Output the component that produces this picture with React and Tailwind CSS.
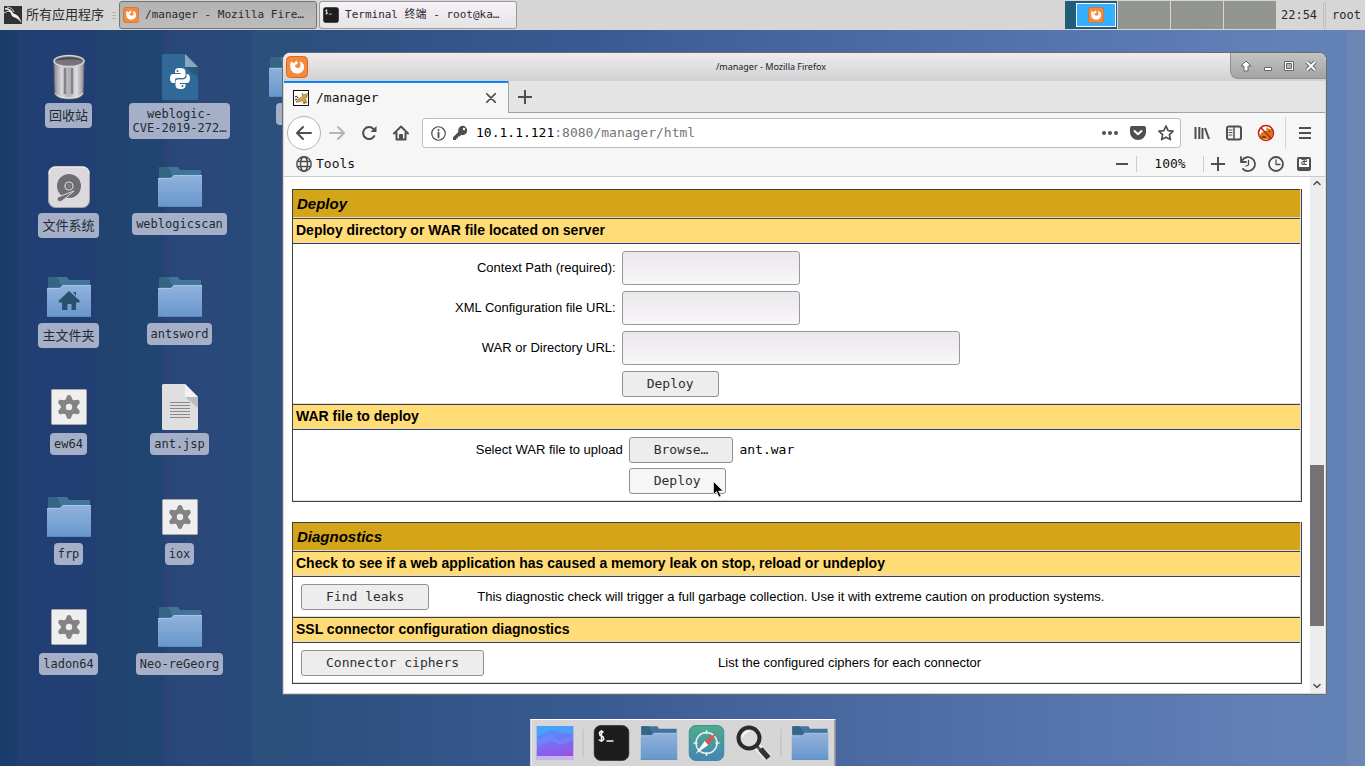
import React, { useRef } from "react";

const MONO = "font-['DejaVu_Sans_Mono','Noto_Sans_CJK_SC',monospace]";

/* ---------- application icons ---------- */

function Folder({ id, home, className }) {
  return (
    <svg viewBox="0 0 44 40" className={className} aria-hidden="true">
      <defs>
        <linearGradient id={id} x1="0" y1="0" x2="0" y2="1">
          <stop offset="0" stopColor="#92b2dc" />
          <stop offset="1" stopColor="#6797cc" />
        </linearGradient>
      </defs>
      <path d="M1 0h19l2 3h21v12H1z" fill="#41769a" />
      <path d="M1 0h9l5 10H1z" fill="#356583" />
      <path d="M0 11h13l3-3h28v32H0z" fill={"url(#" + id + ")"} />
      <path d="M0 11.5h13l3-3h28" fill="none" stroke="#a9c6ea" />
      <path d="M0 39.5h44" stroke="#5a8ac4" />
      {home && (
        <path d="M22 14l11 10-1 1.500h-3V33h-4.500v-6h-4v6H15v-7.500h-3L11.500 24zM26 15h3v4z" fill="#29516d" />
      )}
    </svg>
  );
}

function Trash() {
  return (
    <svg viewBox="0 0 32 46" className="h-[46px] w-8" aria-hidden="true">
      <defs>
        <linearGradient id="can" x1="0" x2="1" y1="0" y2="0">
          <stop offset="0" stopColor="#8b8990" />
          <stop offset=".25" stopColor="#d9d7db" />
          <stop offset=".5" stopColor="#b3b1b6" />
          <stop offset=".75" stopColor="#dedde0" />
          <stop offset="1" stopColor="#908f94" />
        </linearGradient>
      </defs>
      <path d="M1 7l1 33c1 3 6 5 14 5s13-2 14-5l1-33z" fill="url(#can)" stroke="#76747a" />
      <path d="M2 39c2 3 7 5 14 5s12-2 14-5" fill="none" stroke="#eee" />
      <path d="M12 14v26M19 14v26" stroke="#858388" strokeWidth="2.500" />
      <ellipse cx="16" cy="7" rx="15" ry="5.500" fill="#77757a" stroke="#d8d6da" strokeWidth="1.500" />
      <path d="M3 7c2-5 24-5 26 0-4-2-22-2-26 0z" fill="#4f4d52" />
    </svg>
  );
}

function Drive() {
  return (
    <svg viewBox="0 0 42 42" className="h-[42px] w-[42px]" aria-hidden="true">
      <rect x=".5" y=".5" width="41" height="41" rx="7" fill="#dbd9dc" stroke="#a4a2a8" />
      <path d="M1 8q0-7 7-7h26q7 0 7 7" fill="none" stroke="#f4f2f4" />
      <circle cx="21" cy="20" r="12" fill="#6e6d6f" />
      <circle cx="21" cy="20" r="4" fill="none" stroke="#dbd9dc" strokeWidth="1.200" />
      <circle cx="21" cy="20" r="2" fill="#828083" />
      <path d="M26 25L10 31c-2 2 0 6 4 4z" fill="#6e6d6f" stroke="#dbd9dc" />
    </svg>
  );
}

function PythonFile() {
  return (
    <svg viewBox="0 0 36 46" className="h-[46px] w-9" aria-hidden="true">
      <path d="M1 0h22l13 13v32l-1 1H1l-1-1V1z" fill="#306998" />
      <path d="M23 13h13v10z" fill="#28587c" />
      <path d="M23 0l13 13H23z" fill="#87a8bd" />
      <g transform="translate(8 14)" fill="#fff">
        <path d="M10 0C6 0 5 1.500 5 3.500V5h5.500v1H3C1 6 0 8 0 10.500S1 15 3 15h2v-2.500C5 11 6.500 10 8 10h5c1.500 0 2.500-1 2.500-2.500v-4C15.500 1 13.500 0 10 0z" />
        <path d="M10.500 21c4 0 5-1.500 5-3.500V16H10v-1h7c2 0 3-2 3-4.500S19 6 17 6h-.5v2.500c0 1.500-1.500 2.500-3 2.500h-5C7 11 5.500 12 5.500 13.500v4C5.500 20 7.500 21 10.500 21z" />
      </g>
      <circle cx="15.500" cy="17" r="1" fill="#306998" />
      <circle cx="20.500" cy="32" r="1" fill="#306998" />
      <path d="M13 25h8.500q2-.3 2-2.500" fill="none" stroke="#306998" strokeWidth=".7" />
    </svg>
  );
}

function TextFile() {
  return (
    <svg viewBox="0 0 36 46" className="h-[46px] w-9" aria-hidden="true">
      <path d="M1 0h22l13 13v32l-1 1H1l-1-1V1z" fill="#dfdfdf" />
      <path d="M23 13h13v11z" fill="#bdbdbd" />
      <path d="M23 0l13 13H23z" fill="#f3f1f4" />
      <path d="M8 18.500h20M8 21.500h20M8 24.500h20M8 27.500h20M8 30.500h20M8 33.500h20" stroke="#8c8a8d" />
    </svg>
  );
}

function GearFile() {
  return (
    <svg viewBox="0 0 36 36" className="h-9 w-9" aria-hidden="true">
      <rect x=".5" y=".5" width="35" height="35" rx="1" fill="#f0eff0" stroke="#a9a5a6" />
      <g fill="#858385">
        <circle cx="18" cy="18" r="8" />
        {[0, 60, 120, 180, 240, 300].map((a) => (
          <path key={a} d="M14 12l2-5q.5-1 2-1t2 1l2 5z" transform={"rotate(" + a + " 18 18)"} />
        ))}
      </g>
      <circle cx="18" cy="18" r="3.200" fill="#f0eff0" />
    </svg>
  );
}

function FirefoxIcon({ className }) {
  return (
    <svg viewBox="0 0 22 22" className={className} aria-hidden="true">
      <rect x=".5" y=".5" width="21" height="21" rx="4" fill="#f58a3c" stroke="#d06a25" />
      <path d="M4.200 9C4 7 5 6 6 5.500c.3 1 .8 1.300 1.800 1.500C9 6.500 10 5 10.500 4.500c.2 1.200 1 2 1.500 2.500l-1.500 1.500-1.500.5c0 2 1 3 3 3 1.500 0 2.500-1 2.500-3 0-1.500-.5-2.500-1-3.500 3 .5 5 3 4.500 6.500-.5 3.500-3.500 5.500-7 5.500-4 0-7-3-6.800-8.500z" fill="#fff" />
    </svg>
  );
}

function TerminalIcon({ className }) {
  return (
    <svg viewBox="0 0 36 36" className={className} aria-hidden="true">
      <rect x=".5" y=".5" width="35" height="35" rx="7" fill="#1c1d1c" stroke="#444" />
      <path d="M10 7.500q-1-1-2.200-1Q6 6.500 6 8.500t2 2.500 2.200 2.500-2.200 2-2.400-1M8 5v12M13 16h7" fill="none" stroke="#f2f2f2" strokeWidth="1.600" />
    </svg>
  );
}

function KaliIcon() {
  return (
    <svg viewBox="0 0 18 18" className="h-[18px] w-[18px]" aria-hidden="true">
      <rect width="18" height="18" fill="#2f3232" />
      <path d="M1 2c4 0 7 2 8.500 5.500 4 1 6.500 4 8 9.500-3-4-5-5-8-6-2-1-2-2-2.500-3.500C6 5 4 3.500 1 3.500z" fill="#f2f2f2" />
      <path d="M3 1c3 0 6 2 7 5M0 7c3-2 5-2 7-1" fill="none" stroke="#f2f2f2" strokeWidth=".8" />
    </svg>
  );
}

/* ---------- browser toolbar glyphs ---------- */

function Glyph({ children, size = "h-4 w-4", color = "text-[#4f4f50]", width = 2 }) {
  return (
    <svg viewBox="0 0 16 16" fill="none" stroke="currentColor" strokeWidth={width} strokeLinecap="round" strokeLinejoin="round" className={size + " " + color + " shrink-0"} aria-hidden="true">
      {children}
    </svg>
  );
}

const Back = () => <Glyph><path d="M15 8H1.500M7 2L1 8l6 6" /></Glyph>;
const Forward = () => <Glyph color="text-[#b5b5b6]"><path d="M1 8h13.500M9 2l6 6-6 6" /></Glyph>;
const Reload = () => (
  <Glyph><path d="M13.300 11A6 6 0 1 1 12.500 4" /><path d="M15.500 1v6h-6z" fill="currentColor" stroke="none" /></Glyph>
);
const Home = () => (
  <Glyph><path d="M1 8.500L8 1.500l7 7M3.500 8v6.500h9V8" /><path d="M7 14v-4h2v4" /></Glyph>
);
const Info = () => (
  <Glyph width={1.300} size="h-[15px] w-[15px]"><circle cx="8" cy="8" r="7.200" /><path d="M8 7v5M8 4.200v.4" strokeWidth="2" /></Glyph>
);
const Key = () => (
  <Glyph><path d="M10.500.8a4.700 4.700 0 0 1 4.700 4.700c0 3.200-3 5.200-6 4.500L7.500 11.500H6v1.700H4.300V15H1v-2.800L6.300 7A4.800 4.800 0 0 1 10.500.8z" fill="currentColor" stroke="none" /><circle cx="12" cy="4" r="1.200" fill="#fff" stroke="none" /></Glyph>
);
const Dots = () => <Glyph><g fill="currentColor" stroke="none"><circle cx="2" cy="8" r="2" /><circle cx="8" cy="8" r="2" /><circle cx="14" cy="8" r="2" /></g></Glyph>;
const Pocket = () => (
  <Glyph><path d="M2 1h12q2 0 2 2v4.500a8 7.500 0 0 1-16 0V3q0-2 2-2z" fill="currentColor" stroke="none" /><path d="M4.500 6L8 9.300 11.500 6" stroke="#fff" /></Glyph>
);
const Star = () => <Glyph width={1.700}><path d="M8 1l2.100 4.600 5 .6-3.700 3.400 1 5L8 12.200l-4.400 2.400 1-5L.9 6.200l5-.6z" /></Glyph>;
const Library = () => <Glyph><path d="M1.500 2v12M5.300 2v12M8.500 3v11M11 3l4 11" strokeLinecap="butt" /></Glyph>;
const Sidebar = () => (
  <Glyph><rect x="1" y="1.500" width="14" height="13" rx="2" /><path d="M8 2v12" strokeWidth="1.500" /><path d="M3 5h3M3 7.500h3M3 10h3" strokeWidth="1" /></Glyph>
);
const NoFox = () => (
  <svg viewBox="0 0 18 18" className="h-[18px] w-[18px]" aria-hidden="true">
    <circle cx="9" cy="9" r="7.500" fill="#fff" />
    <path d="M3 11c2-4 4-3 6-4l1-4 2 2h3l1 5-3 5H7l-4-1z" fill="#d07f12" />
    <path d="M5 13h4M12 7l1 1" stroke="#5e3608" strokeWidth="1.500" />
    <circle cx="9" cy="9" r="7.500" fill="none" stroke="#cf1515" strokeWidth="1.500" />
    <path d="M3.500 3.500l11 11" stroke="#cf1515" strokeWidth="1.500" />
  </svg>
);
const Menu = () => <Glyph><path d="M2 3h12M2 8h12M2 13h12" strokeLinecap="butt" /></Glyph>;
const Globe = () => (
  <Glyph width={1.500}><circle cx="8" cy="8" r="7.200" /><ellipse cx="8" cy="8" rx="3.500" ry="7.200" /><path d="M1.500 5.500h13M1.500 10.500h13" /></Glyph>
);
const Minus = () => <Glyph><path d="M2 8h12" strokeLinecap="butt" /></Glyph>;
const Plus = () => <Glyph><path d="M1 8h14M8 1v14" strokeLinecap="butt" /></Glyph>;
const History = () => (
  <Glyph width={1.800}><path d="M2 4.500A7 7 0 1 1 3 13M1 1v5h5" /><path d="M8.500 4.500V9l-2.500 1" strokeWidth="1.300" /></Glyph>
);
const Clock = () => <Glyph width={1.800}><circle cx="8" cy="8" r="7" /><path d="M8 4v4.500h4" strokeWidth="1.300" /></Glyph>;

function Encoding() {
  return (
    <span className="flex h-[14px] w-[14px] items-start justify-center rounded-xs border-2 border-b-4 border-[#4f4f50] bg-white text-[10px] leading-[6px] text-[#333]">æ</span>
  );
}

function Tomcat() {
  return (
    <svg viewBox="0 0 16 16" className="h-4 w-4 shrink-0" aria-hidden="true">
      <rect x=".5" y=".5" width="15" height="15" fill="#fff" stroke="#111" />
      <path d="M3 12l2-3 3-1.500L9.500 6 9 3l1.500 1.500h2.500L14.500 3l-.5 4-1.500 2 1.500 4h-2l-2-2-4 .5-2 1z" fill="#d3a548" stroke="#7a5a1e" strokeWidth=".5" />
      <path d="M2 7q2-2 3 1M2 10l2-1M10 13h2" stroke="#222" fill="none" />
    </svg>
  );
}

function IconButton({ label, children, className = "w-8" }) {
  return (
    <button type="button" aria-label={label} className={"flex h-7 shrink-0 items-center justify-center " + className}>
      {children}
    </button>
  );
}

/* ---------- desktop ---------- */

const shortcuts = [
  { name: "回收站", cjk: true, icon: <Trash /> },
  { name: "文件系统", cjk: true, icon: <Drive /> },
  { name: "主文件夹", cjk: true, icon: <Folder id="f1" home className="h-10 w-11" /> },
  { name: "ew64", icon: <GearFile /> },
  { name: "frp", icon: <Folder id="f2" className="h-10 w-11" /> },
  { name: "ladon64", icon: <GearFile /> },
  { name: "weblogic-\nCVE-2019-272…", icon: <PythonFile /> },
  { name: "weblogicscan", icon: <Folder id="f3" className="h-10 w-11" /> },
  { name: "antsword", icon: <Folder id="f4" className="h-10 w-11" /> },
  { name: "ant.jsp", icon: <TextFile /> },
  { name: "iox", icon: <GearFile /> },
  { name: "Neo-reGeorg", icon: <Folder id="f5" className="h-10 w-11" /> },
  { name: "\u00a0\u00a0\u00a0", icon: <Folder id="f6" className="h-10 w-11" /> },
];

function Shortcut({ name, cjk, icon }) {
  return (
    <button type="button" className="flex h-[110px] flex-col items-center pt-[2px]">
      <span className="flex h-[52px] items-center">{icon}</span>
      <span className={"rounded bg-[#a5b0c8] px-1 py-1 text-center whitespace-pre text-[#222a30] " + (cjk ? "text-[13px] leading-[17px]" : "text-[12px] leading-[14px]")}>
        {name}
      </span>
    </button>
  );
}

function TaskButton({ active, icon, children }) {
  return (
    <button
      type="button"
      className={
        "flex h-7 w-[198px] items-center gap-[6px] rounded-[3px] border px-[3px] text-[11px] whitespace-nowrap " +
        (active ? "border-[#747474] bg-linear-to-b from-[#b2b2b2] to-[#bdbdbd]" : "border-[#9b999c] bg-linear-to-b from-[#f6f1f6] to-[#e6e4e6]")
      }
    >
      {icon}
      <span>{children}</span>
    </button>
  );
}

function TopPanel() {
  return (
    <header className="flex h-[30px] shrink-0 items-center bg-[#d6d6d6] text-[12px] text-[#272c2f]">
      <button type="button" className="flex items-center gap-1 pl-1 text-[13px]">
        <KaliIcon />
        所有应用程序
      </button>
      <span className="mr-[3px] ml-2 flex w-1 flex-col gap-[2px]">
        <i className="h-px bg-[#b4b4b4]" />
        <i className="h-px bg-[#b4b4b4]" />
        <i className="h-px bg-[#b4b4b4]" />
      </span>
      <nav className="flex gap-[2px]">
        <TaskButton active icon={<FirefoxIcon className="h-4 w-4 shrink-0" />}>/manager - Mozilla Fire…</TaskButton>
        <TaskButton icon={<TerminalIcon className="h-4 w-4 shrink-0" />}>Terminal 终端 - root@ka…</TaskButton>
      </nav>
      <div className="ml-auto flex h-7 gap-px">
        <button type="button" aria-label="Workspace 1" className="flex w-[52px] justify-end bg-[#225c7b] py-[2px] pr-px">
          <span className="flex h-6 w-10 items-center justify-center border border-white bg-[#35b0ff]">
            <FirefoxIcon className="h-4 w-4" />
          </span>
        </button>
        <button type="button" aria-label="Workspace 2" className="w-[52px] bg-[#929590]" />
        <button type="button" aria-label="Workspace 3" className="w-[52px] bg-[#929590]" />
        <button type="button" aria-label="Workspace 4" className="w-[52px] bg-[#929590]" />
      </div>
      <time className="mr-[6px] ml-[5px]">22:54</time>
      <span className="h-[27px] w-[3px] rounded-xs border border-[#c0bec1]" />
      <button type="button" className="pr-1 pl-[6px]">root</button>
    </header>
  );
}

/* ---------- page inside the browser ---------- */

function Title({ children }) {
  return <h2 className="h-[29px] border-t border-b border-t-[#414144] border-b-[#ddd] bg-[#d4a518] pl-1 text-[15px] leading-[27px] font-bold italic">{children}</h2>;
}

function Heading({ children }) {
  return <h3 className="h-[25px] border-t border-b border-t-[#414144] border-b-[#ddd] bg-[#ffdc75] pl-[3px] text-[14px] leading-[23px] font-bold">{children}</h3>;
}

function Body({ children, className }) {
  return <div className={"border-t border-b border-t-[#414144] border-b-[#ddd] " + className}>{children}</div>;
}

function Panel({ children }) {
  return (
    <section className="border-r border-b border-l border-[#414144]">
      <div className="border-r border-[#ddd]">{children}</div>
    </section>
  );
}

function PushButton({ children, hover, ...rest }) {
  return (
    <button
      type="button"
      className={"h-[26px] rounded-[3px] border border-[#918f92] px-6 text-[13px] leading-6 text-[#2c2f31] " + MONO + (hover ? " bg-[#f7f6f7]" : " bg-[#eeedee]")}
      {...rest}
    >
      {children}
    </button>
  );
}

function Field({ id, label, wide }) {
  return (
    <>
      <label htmlFor={id} className="text-right">{label}</label>
      <input
        id={id}
        type="text"
        className={"h-[34px] rounded-[3px] border border-[#98969a] bg-linear-to-b from-[#e9e8ea] via-[#f1eef1] to-[#f9f8f9] px-2 " + (wide ? "w-[338px]" : "w-[178px]")}
      />
    </>
  );
}

function Page() {
  const file = useRef(null);
  return (
    <main className="min-w-0 flex-1 overflow-hidden bg-white px-2 pt-3 font-['Liberation_Sans',Arial,sans-serif] text-[13px] text-black">
      <div className="flex flex-col gap-5">
        <Panel>
          <Title>Deploy</Title>
          <Heading>Deploy directory or WAR file located on server</Heading>
          <Body className="pt-[7px] pb-[6px]">
            <form className="grid grid-cols-[323fr_679fr] items-center gap-[6px]">
              <Field id="path" label="Context Path (required):" />
              <Field id="config" label="XML Configuration file URL:" />
              <Field id="war" label="WAR or Directory URL:" wide />
              <span />
              <div><PushButton>Deploy</PushButton></div>
            </form>
          </Body>
          <Heading>WAR file to deploy</Heading>
          <Body className="pt-[7px] pb-[6px]">
            <form className="grid grid-cols-[330fr_672fr] items-center gap-x-[6px] gap-y-[5px]">
              <label htmlFor="upload" className="text-right">Select WAR file to upload</label>
              <div className="flex items-center gap-[6px]">
                <input ref={file} id="upload" type="file" className="hidden" />
                <PushButton onClick={() => file.current.click()}>Browse…</PushButton>
                <output className={"text-[13px] " + MONO}>ant.war</output>
              </div>
              <span />
              <div className="flex">
                <span className="relative">
                  <PushButton hover>Deploy</PushButton>
                  <svg viewBox="0 0 12 18" className="absolute top-[13px] left-[84px] h-[18px] w-3" aria-hidden="true">
                    <path d="M.5.500v13l3-3 2.500 5.500 2-1-2.300-5H10z" fill="#050505" stroke="#fff" strokeWidth=".6" />
                  </svg>
                </span>
              </div>
            </form>
          </Body>
        </Panel>
        <Panel>
          <Title>Diagnostics</Title>
          <Heading>Check to see if a web application has caused a memory leak on stop, reload or undeploy</Heading>
          <Body className="flex h-[41px] items-center pl-2">
            <PushButton>Find leaks</PushButton>
            <p className="ml-12">This diagnostic check will trigger a full garbage collection. Use it with extreme caution on production systems.</p>
          </Body>
          <Heading>SSL connector configuration diagnostics</Heading>
          <Body className="flex h-[41px] items-center pl-2">
            <PushButton>Connector ciphers</PushButton>
            <p className="ml-[234px]">List the configured ciphers for each connector</p>
          </Body>
        </Panel>
      </div>
    </main>
  );
}

function ScrollBar() {
  return (
    <div className="mr-px flex w-[14px] shrink-0 flex-col items-center bg-[#eeedee]" aria-hidden="true">
      <span className="flex h-3 items-center"><Glyph size="h-2 w-2" width={3}><path d="M2 11l6-6 6 6" /></Glyph></span>
      <span className="flex w-full flex-1 flex-col">
        <span className="grow-[275]" />
        <span className="w-full grow-[161] bg-[#747274]" />
        <span className="grow-[53]" />
      </span>
      <span className="flex h-[14px] items-center"><Glyph size="h-2 w-2" width={3}><path d="M2 5l6 6 6-6" /></Glyph></span>
    </div>
  );
}

function WindowControls() {
  return (
    <div className="flex h-[26px] w-[96px] items-center justify-around rounded-bl-lg border-b border-l border-[#919091] bg-linear-to-b from-[#c4c3c4] to-[#a5a4a5] px-1">
      <button type="button" aria-label="Shade" className="flex w-5 justify-center">
        <svg viewBox="0 0 12 12" className="h-3 w-3"><path d="M6 1l5 5H8v5H4V6H1z" fill="#fff" stroke="#666" /></svg>
      </button>
      <button type="button" aria-label="Minimize" className="flex w-5 justify-center">
        <svg viewBox="0 0 12 12" className="h-3 w-3"><path d="M2.500 7.500h7v3h-7z" fill="#fff" stroke="#666" /></svg>
      </button>
      <button type="button" aria-label="Maximize" className="flex w-5 justify-center">
        <svg viewBox="0 0 12 12" className="h-3 w-3"><path d="M1.500 1.500h9v9h-9z" fill="#fff" stroke="#666" /><path d="M3.500 3.500h5v5h-5z" fill="#b5b4b5" stroke="#666" /></svg>
      </button>
      <button type="button" aria-label="Close" className="flex w-5 justify-center">
        <svg viewBox="0 0 12 12" className="h-3 w-3"><path d="M2 2l8 8M10 2l-8 8" stroke="#666" strokeWidth="4" /><path d="M2 2l8 8M10 2l-8 8" stroke="#fff" strokeWidth="2" /></svg>
      </button>
    </div>
  );
}

function Browser() {
  return (
    <section className="absolute top-[52px] right-[38px] bottom-[71px] left-[282px] flex flex-col overflow-hidden rounded-t-lg border border-[#6c6b6c] bg-[#d6d5d6]">
      <header className="flex h-7 shrink-0 items-start bg-linear-to-b from-[#efecef] to-[#d2d1d2]">
        <FirefoxIcon className="mt-[3px] ml-[3px] h-[22px] w-[22px]" />
        <h1 className="flex-1 pl-1 text-center font-['Noto_Sans',sans-serif] text-[9px] leading-7 text-[#222]">/manager - Mozilla Firefox</h1>
        <WindowControls />
      </header>
      <div className="mx-px mb-px flex min-h-0 flex-1 flex-col bg-[#f6f6f7]">
        <div className="flex h-8 shrink-0 bg-[#e5e4e5]">
          <button type="button" className="flex w-56 items-center gap-[7px] border-t-2 border-[#0a84ff] bg-[#f6f6f7] pr-3 pl-[9px] text-[13px] text-[#111]">
            <Tomcat />
            <span className="flex-1 text-left">/manager</span>
            <Glyph size="h-[10px] w-[10px]" width={2.500}><path d="M1 1l14 14M15 1L1 15" /></Glyph>
          </button>
          <div className="flex flex-1 items-center border-b border-l border-[#a3a2a4]">
            <IconButton label="New tab"><Glyph size="h-[14px] w-[14px]"><path d="M0 8h16M8 0v16" strokeWidth="2.300" /></Glyph></IconButton>
          </div>
        </div>
        <div className="flex h-10 shrink-0 items-center pr-1 pl-[3px]">
          <button type="button" aria-label="Back" className="flex h-[34px] w-[34px] shrink-0 items-center justify-center rounded-full border border-[#b4b3b4] bg-white"><Back /></button>
          <IconButton label="Forward"><Forward /></IconButton>
          <IconButton label="Reload"><Reload /></IconButton>
          <IconButton label="Home"><Home /></IconButton>
          <div className="mx-[5px] flex h-[30px] flex-1 items-center rounded-[3px] border border-[#bebdbf] bg-white pl-2">
            <Info />
            <span className="ml-[6px]"><Key /></span>
            <div className="relative ml-2 flex-1 text-[13px] leading-7">
              <input aria-label="Address" defaultValue="10.1.1.121:8080/manager/html" className="w-full text-transparent caret-black outline-none" />
              <span className="pointer-events-none absolute inset-0 whitespace-nowrap text-[#767577]" aria-hidden="true">
                <span className="text-black">10.1.1.121</span>:8080/manager/html
              </span>
            </div>
            <IconButton label="Page actions" className="w-7"><Dots /></IconButton>
            <IconButton label="Save to Pocket" className="w-7"><Pocket /></IconButton>
            <IconButton label="Bookmark" className="w-7"><Star /></IconButton>
          </div>
          <IconButton label="Library"><Library /></IconButton>
          <IconButton label="Sidebars"><Sidebar /></IconButton>
          <IconButton label="Proxy"><NoFox /></IconButton>
          <span className="ml-[3px] h-8 w-px bg-[#d5d4d6]" />
          <IconButton label="Menu" className="ml-[2px] w-[33px]"><Menu /></IconButton>
        </div>
        <div className="flex h-6 shrink-0 items-center border-b border-[#cccbcd] pr-[5px] pb-[2px] pl-3 text-[13px] text-[#111]">
          <button type="button" className="flex items-center gap-1"><Globe />Tools</button>
          <div className="ml-auto flex items-center">
            <IconButton label="Zoom out" className="w-7"><Minus /></IconButton>
            <span className="h-4 w-px bg-[#cccbcd]" />
            <button type="button" className="w-[66px] text-center">100%</button>
            <span className="h-4 w-px bg-[#cccbcd]" />
            <IconButton label="Zoom in" className="w-7"><Plus /></IconButton>
            <IconButton label="Recent" className="w-8"><History /></IconButton>
            <IconButton label="History" className="w-6"><Clock /></IconButton>
            <IconButton label="Text encoding" className="w-8"><Encoding /></IconButton>
          </div>
        </div>
        <div className="flex min-h-0 flex-1">
          <Page />
          <ScrollBar />
        </div>
      </div>
    </section>
  );
}

/* ---------- dock ---------- */

function Dock() {
  return (
    <nav className="absolute bottom-0 left-1/2 flex h-[47px] -translate-x-1/2 items-center border-t border-r border-l border-t-white border-r-[#777] border-l-white bg-[#d6d6d6] pr-[6px] pl-[5px]">
      <button type="button" aria-label="Show desktop">
        <svg viewBox="0 0 37 34" className="h-[34px] w-[37px]">
          <defs>
            <linearGradient id="desk" x1="0" y1="0" x2=".3" y2="1">
              <stop offset="0" stopColor="#3aa0ff" />
              <stop offset=".5" stopColor="#6a7af8" />
              <stop offset="1" stopColor="#9b50e0" />
            </linearGradient>
          </defs>
          <path d="M0 0h37v34H0z" fill="url(#desk)" />
          <path d="M0 11L14 4l23 5V0H0z" fill="#4aa8fa" opacity=".7" />
          <path d="M0 14l14-6 8 6 15-4v5L24 19l-9-4L0 20z" fill="#7a8cfa" opacity=".5" />
          <path d="M0 24l12-8 10 6 15-8v10L20 30H0z" fill="#8a62ee" opacity=".5" />
          <path d="M0 30h37v4H0z" fill="#c3b6ee" />
        </svg>
      </button>
      <span className="mr-[10px] ml-[9px] h-7 w-px bg-[#bbb]" />
      <button type="button" aria-label="Terminal"><TerminalIcon className="h-9 w-9" /></button>
      <button type="button" aria-label="Files" className="ml-[11px]"><Folder id="f7" className="h-[34px] w-[37px]" /></button>
      <button type="button" aria-label="Web browser" className="ml-[11px]">
        <svg viewBox="0 0 36 36" className="h-9 w-9">
          <defs>
            <linearGradient id="compass" x1="0" y1="0" x2="0" y2="1">
              <stop offset="0" stopColor="#4dab8a" />
              <stop offset="1" stopColor="#4486b6" />
            </linearGradient>
          </defs>
          <rect x=".5" y=".5" width="35" height="35" rx="7" fill="url(#compass)" stroke="#4a8a93" />
          <circle cx="18" cy="18" r="10.500" fill="none" stroke="#e8f1f2" strokeWidth="1.500" />
          <path d="M18 5v4M18 27v4M5 18h4M27 18h4" stroke="#e8f1f2" strokeWidth="1.500" />
          <path d="M29 7L19.800 20l-3.600-4z" fill="#e5504b" />
          <path d="M7 29l9.200-13 3.600 4z" fill="#fff" />
        </svg>
      </button>
      <button type="button" aria-label="Search" className="ml-[11px]">
        <svg viewBox="0 0 36 36" className="h-9 w-9">
          <path d="M22 22l11 11" stroke="#eee" strokeWidth="8" />
          <path d="M21 21l4 4" stroke="#555" strokeWidth="3" />
          <path d="M25 24l8 9" stroke="#333" strokeWidth="5.500" />
          <circle cx="13.500" cy="13" r="10.500" fill="#dcdcdc" stroke="#2b2b2b" strokeWidth="4" />
          <path d="M7 12q1-5 7-6" fill="none" stroke="#fff" strokeWidth="1.500" />
        </svg>
      </button>
      <span className="mr-[10px] ml-[9px] h-7 w-px bg-[#bbb]" />
      <button type="button" aria-label="Home folder"><Folder id="f8" className="h-[34px] w-[37px]" /></button>
    </nav>
  );
}

export default function App() {
  return (
    <div className={"relative flex h-screen min-h-[640px] flex-col overflow-hidden bg-[linear-gradient(90deg,#1a3c6a_0,#1b3e6c_17px,#213f73_18px,#213f73_95px,#20446f_96px,#204570_164px,#2b437a_165px,#2a477a_174px,#29497a_250px,#2a507b_254px,#2d5080_330px,#3a5b92_600px,#4a68a0_830px,#5775ae_1080px,#6280b6_1250px,#6382b6_1346px,#6c87b4_1348px,#6c87b4_100%)] " + MONO}>
      <TopPanel />
      <div className="grid flex-1 auto-cols-[111px] grid-flow-col grid-rows-[repeat(6,110px)] pt-[19px] pl-[13px]">
        {shortcuts.map((s, i) => (
          <Shortcut key={i} {...s} />
        ))}
      </div>
      <Browser />
      <Dock />
    </div>
  );
}
